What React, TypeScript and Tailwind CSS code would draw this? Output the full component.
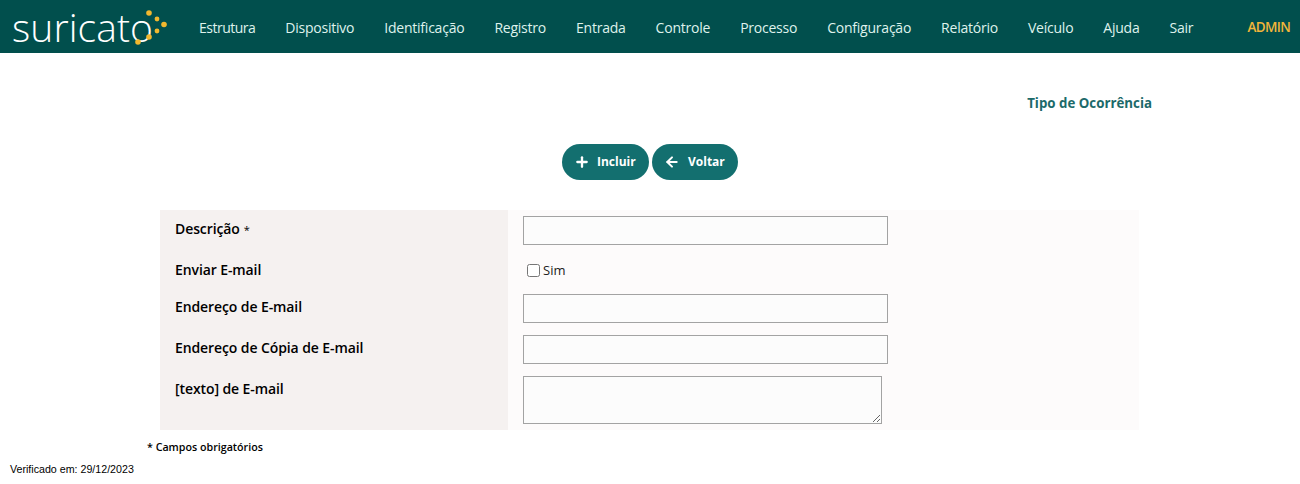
import React from 'react';
import { Plus, ArrowLeft } from 'lucide-react';

const menuItems = [
  'Estrutura',
  'Dispositivo',
  'Identificação',
  'Registro',
  'Entrada',
  'Controle',
  'Processo',
  'Configuração',
  'Relatório',
  'Veículo',
  'Ajuda',
  'Sair',
];

function Logo() {
  return (
    <div className="relative h-[53px] w-[187px] pl-[12px]">
      <span className="block font-['Open_Sans',sans-serif] text-[39px] leading-[53px] font-light tracking-[0.1px] text-white">
        suricato
      </span>
      {/* dots around the o */}
      <svg width="187" height="53" viewBox="0 0 187 53" className="absolute top-0 left-0">
        <g fill="#f2b82e">
          <circle cx="149" cy="13" r="2.8" />
          <circle cx="157" cy="19" r="2.4" />
          <circle cx="164" cy="24.5" r="2.8" />
          <circle cx="157" cy="31" r="2.4" />
          <circle cx="149" cy="37" r="2.8" />
          <circle cx="138" cy="42" r="2.8" />
        </g>
      </svg>
    </div>
  );
}

function Row({ label, required, children, height }: { label: string; required?: boolean; children: React.ReactNode; height: string }) {
  return (
    <div className={`flex ${height}`}>
      <div className="w-[348px] shrink-0 bg-[#f5f1f0] pt-[9px] pl-[15px] text-[14px] leading-5 font-semibold tracking-[-0.1px] text-black">
        {label}
        {required && <span className="ml-1 text-[11px] font-normal">*</span>}
      </div>
      <div className="flex-1 bg-[#fdfbfb] pt-[6px] pl-[15px]">{children}</div>
    </div>
  );
}

function TextInput() {
  return <input type="text" className="block h-[29px] w-[365px] border border-[#a3a3a3] bg-[#fcfcfc]" />;
}

export default function App() {
  return (
    <div className="min-h-[484px] bg-white font-['Open_Sans',sans-serif]">
      <nav className="flex h-[53px] items-center bg-[#014f4d] pr-[10px]">
        <Logo />
        <ul className="flex flex-1 gap-[30px] pt-[1px] pl-[12px]">
          {menuItems.map((item) => (
            <li
              key={item}
              className={`text-[14px] text-[#dff2ec] ${item === 'Estrutura' ? 'tracking-[-0.5px]' : 'tracking-[-0.23px]'}`}
            >
              {item}
            </li>
          ))}
        </ul>
        <span className="pt-[1px] text-[13.5px] font-semibold tracking-[-0.7px] text-[#f2b63a]">ADMIN</span>
      </nav>

      <div className="pt-[40px] pr-[148px] text-right text-[13.3px] leading-5 font-bold text-[#1c6a6a]">
        Tipo de Ocorrência
      </div>

      <div className="mt-[31px] flex justify-center gap-[3px]">
        <button className="flex h-9 w-[87px] items-center rounded-full bg-[#136f6f] pl-[12px] text-[12px] font-bold text-white">
          <Plus size={16} strokeWidth={3.5} />
          <span className="ml-[7px]">Incluir</span>
        </button>
        <button className="flex h-9 w-[86px] items-center rounded-full bg-[#136f6f] pl-[12px] text-[12px] font-bold text-white">
          <ArrowLeft size={16} strokeWidth={3} />
          <span className="ml-[8px]">Voltar</span>
        </button>
      </div>

      <div className="mt-[30px] ml-[160px] w-[979px]">
        <Row label="Descrição" required height="h-[41px]">
          <TextInput />
        </Row>
        <Row label="Enviar E-mail" height="h-[37px]">
          <label className="flex h-[27px] items-center pl-[4px] text-[13px] text-[#222]">
            <input type="checkbox" className="m-0 h-[13px] w-[13px]" />
            <span className="ml-[3px]">Sim</span>
          </label>
        </Row>
        <Row label="Endereço de E-mail" height="h-[41px]">
          <TextInput />
        </Row>
        <Row label="Endereço de Cópia de E-mail" height="h-[41px]">
          <TextInput />
        </Row>
        <Row label="[texto] de E-mail" height="h-[60px]">
          <textarea className="block h-[48px] w-[359px] border border-[#a3a3a3] bg-[#fcfcfc]" />
        </Row>
      </div>

      <div className="mt-[9px] pl-[147px] text-[10.7px] leading-4 font-semibold text-black">* Campos obrigatórios</div>
      <div className="mt-[8px] pl-[10px] font-['Liberation_Sans',sans-serif] text-[10.67px] leading-3 text-black">
        Verificado em: 29/12/2023
      </div>
    </div>
  );
}
